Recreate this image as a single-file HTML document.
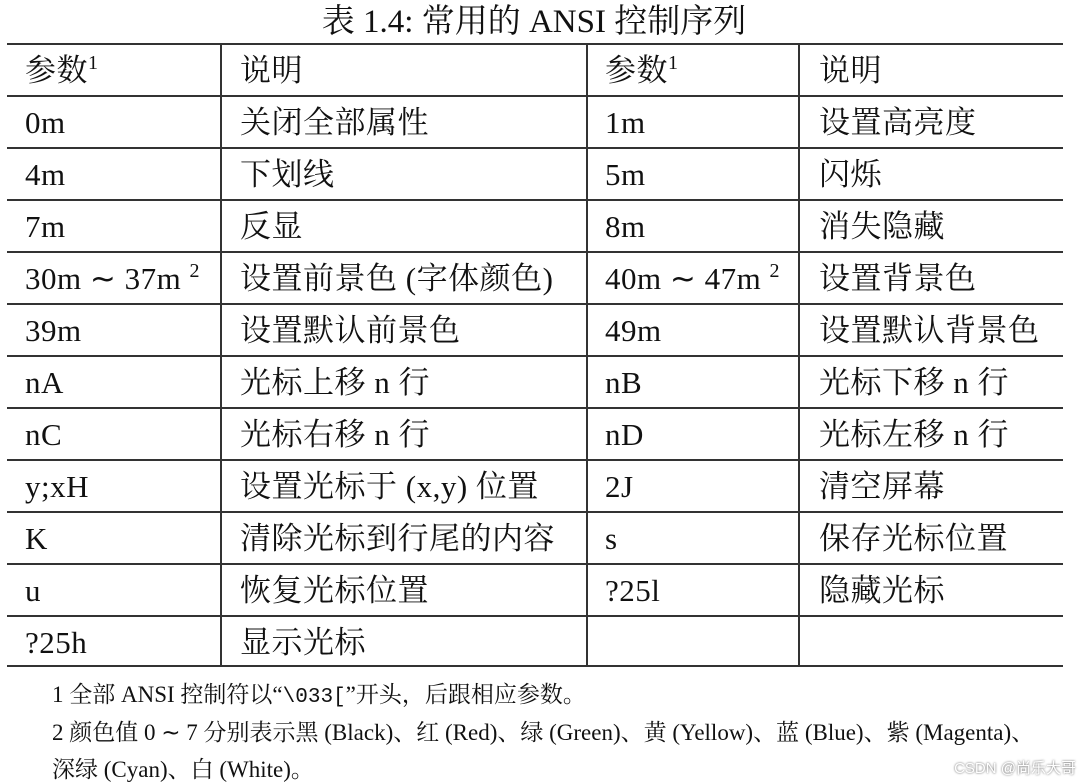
<!DOCTYPE html>
<html><head><meta charset="utf-8"><style>
body{margin:0;width:1088px;height:784px;background:#fff;position:relative;overflow:hidden;font-family:"Liberation Serif","Noto Serif CJK SC",serif;color:#111}
.t{position:absolute;top:2px;left:0;width:1068px;text-align:center;font-size:33px;line-height:40px}
.h{position:absolute;left:7px;width:1056px;height:2px;background:#333}
.v{position:absolute;top:44px;height:622px;width:1.5px;background:#333}
.r{position:absolute;left:0;width:1088px;height:52px}
.r span{position:absolute;top:0;line-height:54px;font-size:31px;white-space:nowrap;letter-spacing:0.5px}
sup{font-size:20px;position:relative;top:-12px;vertical-align:baseline;line-height:0}
.f{position:absolute;left:52px;font-size:23px;white-space:nowrap}
.w{position:absolute;right:12px;bottom:6px;font-size:15px;font-family:"Liberation Sans","Noto Sans CJK SC",sans-serif;color:#fff;text-shadow:0 0 2px #555}
</style></head><body>
<div class="t">表 1.4: 常用的 ANSI 控制序列</div>
<div class="h" style="top:43px"></div><div class="h" style="top:95px"></div><div class="h" style="top:147px"></div><div class="h" style="top:199px"></div><div class="h" style="top:251px"></div><div class="h" style="top:303px"></div><div class="h" style="top:355px"></div><div class="h" style="top:407px"></div><div class="h" style="top:459px"></div><div class="h" style="top:511px"></div><div class="h" style="top:563px"></div><div class="h" style="top:615px"></div><div class="h" style="top:665px"></div>
<div class="v" style="left:220px"></div><div class="v" style="left:586px"></div><div class="v" style="left:798px"></div>
<div class="r" style="top:44px"><span style="left:25px">参数<sup>1</sup></span><span style="left:240px">说明</span><span style="left:605px">参数<sup>1</sup></span><span style="left:819px">说明</span></div>
<div class="r" style="top:96px"><span style="left:25px">0m</span><span style="left:240px">关闭全部属性</span><span style="left:605px">1m</span><span style="left:819px">设置高亮度</span></div>
<div class="r" style="top:148px"><span style="left:25px">4m</span><span style="left:240px">下划线</span><span style="left:605px">5m</span><span style="left:819px">闪烁</span></div>
<div class="r" style="top:200px"><span style="left:25px">7m</span><span style="left:240px">反显</span><span style="left:605px">8m</span><span style="left:819px">消失隐藏</span></div>
<div class="r" style="top:252px"><span style="left:25px">30m ∼ 37m <sup>2</sup></span><span style="left:240px">设置前景色 (字体颜色)</span><span style="left:605px">40m ∼ 47m <sup>2</sup></span><span style="left:819px">设置背景色</span></div>
<div class="r" style="top:304px"><span style="left:25px">39m</span><span style="left:240px">设置默认前景色</span><span style="left:605px">49m</span><span style="left:819px">设置默认背景色</span></div>
<div class="r" style="top:356px"><span style="left:25px">nA</span><span style="left:240px">光标上移 n 行</span><span style="left:605px">nB</span><span style="left:819px">光标下移 n 行</span></div>
<div class="r" style="top:408px"><span style="left:25px">nC</span><span style="left:240px">光标右移 n 行</span><span style="left:605px">nD</span><span style="left:819px">光标左移 n 行</span></div>
<div class="r" style="top:460px"><span style="left:25px">y;xH</span><span style="left:240px">设置光标于 (x,y) 位置</span><span style="left:605px">2J</span><span style="left:819px">清空屏幕</span></div>
<div class="r" style="top:512px"><span style="left:25px">K</span><span style="left:240px">清除光标到行尾的内容</span><span style="left:605px">s</span><span style="left:819px">保存光标位置</span></div>
<div class="r" style="top:564px"><span style="left:25px">u</span><span style="left:240px">恢复光标位置</span><span style="left:605px">?25l</span><span style="left:819px">隐藏光标</span></div>
<div class="r" style="top:616px"><span style="left:25px">?25h</span><span style="left:240px">显示光标</span></div>
<div class="f" style="top:676px">1 全部 ANSI 控制符以“<span style="font-family:'Liberation Mono',monospace;font-size:21px">\033[</span>”开头，后跟相应参数。</div>
<div class="f" style="top:714px">2 颜色值 0 ∼ 7 分别表示黑 (Black)、红 (Red)、绿 (Green)、黄 (Yellow)、蓝 (Blue)、紫 (Magenta)、</div>
<div class="f" style="top:751px">深绿 (Cyan)、白 (White)。</div>
<div class="w">CSDN @尚乐大哥</div>
</body></html>
